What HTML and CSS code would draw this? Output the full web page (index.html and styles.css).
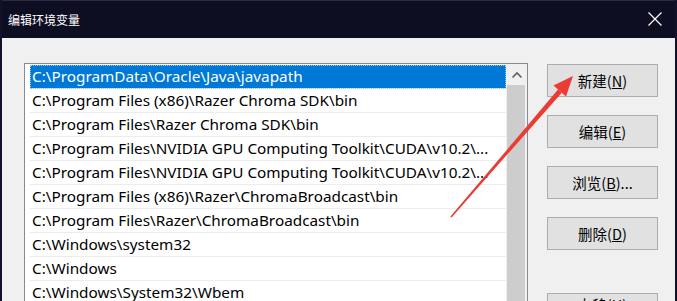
FILE: index.html
```html
<!DOCTYPE html>
<html lang="zh-CN">
<head>
    <meta charset="UTF-8">
    <title>编辑环境变量</title>
    <link rel="stylesheet" href="styles.css">
</head>
<body>
    <div class="window">
        <div class="titlebar">
            <span class="title">编辑环境变量</span>
            <span class="close">
                <svg width="14" height="14" viewBox="0 0 14 14">
                    <path d="M0.5 0.5 L13.5 13.5 M13.5 0.5 L0.5 13.5" stroke="#fff" stroke-width="1.2" fill="none"/>
                </svg>
            </span>
        </div>

        <div class="content">
            <div class="listbox">
                <ul class="paths">
                    <li class="selected">C:\ProgramData\Oracle\Java\javapath</li>
                    <li>C:\Program Files (x86)\Razer Chroma SDK\bin</li>
                    <li>C:\Program Files\Razer Chroma SDK\bin</li>
                    <li>C:\Program Files\NVIDIA GPU Computing Toolkit\CUDA\v10.2\...</li>
                    <li>C:\Program Files\NVIDIA GPU Computing Toolkit\CUDA\v10.2\...</li>
                    <li>C:\Program Files (x86)\Razer\ChromaBroadcast\bin</li>
                    <li>C:\Program Files\Razer\ChromaBroadcast\bin</li>
                    <li>C:\Windows\system32</li>
                    <li>C:\Windows</li>
                    <li>C:\Windows\System32\Wbem</li>
                </ul>
                <div class="scrollbar">
                    <div class="scroll-up">
                        <svg width="12" height="8" viewBox="0 0 12 8">
                            <path d="M1.5 6.5 L6 2 L10.5 6.5" stroke="#606060" stroke-width="1.6" fill="none"/>
                        </svg>
                    </div>
                    <div class="thumb"></div>
                </div>
            </div>

            <div class="actions">
                <button>新建(<u>N</u>)</button>
                <button>编辑(<u>E</u>)</button>
                <button>浏览(<u>B</u>)...</button>
                <button>删除(<u>D</u>)</button>
                <button class="spaced">上移(<u>U</u>)</button>
            </div>
        </div>

        <!-- red annotation arrow pointing at the New button -->
        <svg class="annotation" width="677" height="301" viewBox="0 0 677 301">
            <polygon points="451.6,217.5 450.4,216.5 558.0,89.5 561.8,92.7" fill="#ea3b35"/>
            <polygon points="573,76 566,96.5 553.5,85.5" fill="#ea3b35"/>
        </svg>
    </div>
</body>
</html>
```

FILE: styles.css
```css
body {
    margin: 0;
    padding: 0;
    background-color: #f0f0f0;
    font-family: "Noto Sans", "Noto Sans CJK SC", sans-serif;
}

.window {
    position: relative;
    width: 677px;
    height: 301px;
    box-sizing: border-box;
    border-left: 2px solid #10112a;
    border-right: 2px solid #10112a;
    background-color: #f0f0f0;
    overflow: hidden;
}

.titlebar {
    height: 37px;
    border-top: 1px solid #2a2c40;
    background-color: #0d0e22;
    display: flex;
    align-items: center;
    justify-content: space-between;
    padding: 0 13px 0 6px;
    color: #fff;
}

.title {
    font-family: "Noto Sans CJK SC", sans-serif;
    font-size: 12px;
    margin-top: -1px;
}

.close {
    display: flex;
    margin-top: -2px;
}

.content {
    display: flex;
    padding: 25px 0 0 22px;
}

.listbox {
    width: 504px;
    height: 260px;
    box-sizing: border-box;
    border: 1px solid #868a92;
    background-color: #fff;
    display: flex;
    flex-shrink: 0;
}

.paths {
    list-style: none;
    margin: 0;
    padding: 1px 0 0 5px;
    width: 476px;
}

.paths li {
    height: 23px;
    line-height: 23px;
    border-bottom: 1px solid #ececec;
    padding-left: 2px;
    font-size: 15.3px;
    color: #000;
    white-space: nowrap;
    overflow: hidden;
}

.paths li.selected {
    background-color: #0078d7;
    color: #fff;
    outline: 1px dotted #9cc8ee;
    outline-offset: -1px;
}

.scrollbar {
    width: 21px;
    margin-left: auto;
    background-color: #f0f0f0;
    display: flex;
    flex-direction: column;
}

.scroll-up {
    height: 21px;
    display: flex;
    align-items: center;
    justify-content: center;
}

.thumb {
    flex: 1;
    margin: 0 2px 0 1px;
    background-color: #cdcdcd;
}

.actions {
    display: flex;
    flex-direction: column;
    gap: 18px;
    margin: 1px 0 0 19px;
}

.actions button {
    width: 111px;
    height: 33px;
    box-sizing: border-box;
    background-color: #e1e1e1;
    border: 1px solid #adadad;
    font-family: "Noto Sans CJK SC", sans-serif;
    font-size: 14.5px;
    color: #000;
    padding: 0;
}

.actions button.spaced {
    margin-top: 25px;
    padding-bottom: 11px;
}

.annotation {
    position: absolute;
    left: -2px;
    top: 0;
    pointer-events: none;
}
```
